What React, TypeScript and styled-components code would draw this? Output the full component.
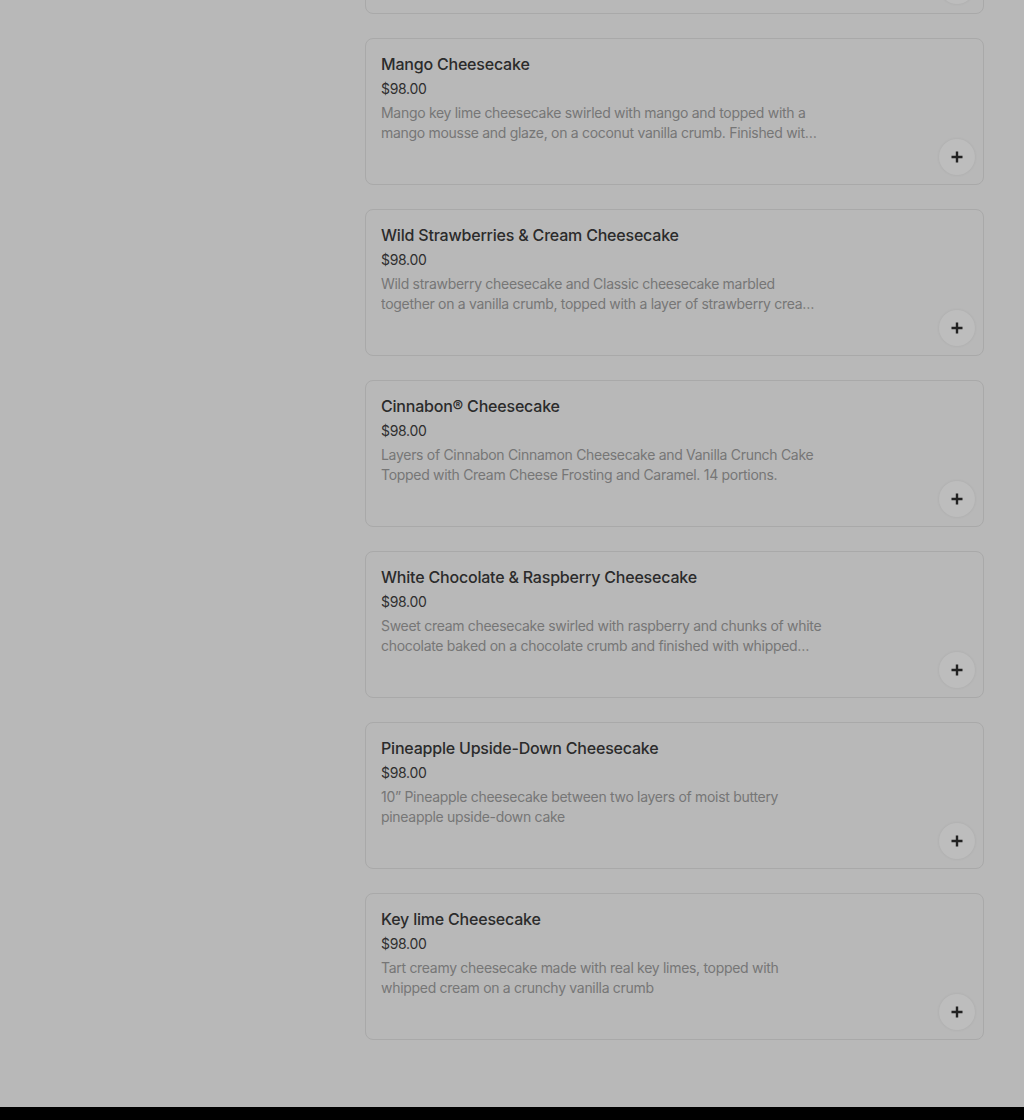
import React from "react";
import styled, { createGlobalStyle } from "styled-components";

const GlobalStyle = createGlobalStyle`
  html, body {
    margin: 0;
    padding: 0;
    background: #b8b8b8;
  }
  body {
    font-family: Inter, "Noto Sans", "Liberation Sans", sans-serif;
    -webkit-font-smoothing: antialiased;
  }
  * { box-sizing: border-box; }
`;

const Page = styled.div`
  display: flex;
  flex-direction: column;
  min-height: 1120px;
  background: #b8b8b8;
`;

const Layout = styled.div`
  display: grid;
  grid-template-columns: 301px 1fr;
  column-gap: 24px;
  padding: 0 40px;
  flex: 1;
`;

const Sidebar = styled.aside``;

const List = styled.ul`
  list-style: none;
  margin: 0;
  padding: 0 0 67px;
  display: flex;
  flex-direction: column;
  gap: 24px;
`;

const Clip = styled.li`
  height: 14px;
  overflow: hidden;
  display: flex;
  flex-direction: column;
  justify-content: flex-end;
`;

const Item = styled.li``;

const Card = styled.div`
  flex: none;
  height: 147px;
  border: 1px solid #a9a9a9;
  border-radius: 8px;
  display: flex;
  justify-content: space-between;
  background: #b8b8b8;
`;

const Info = styled.div`
  padding: 13px 0 0 15px;
  display: flex;
  flex-direction: column;
  width: 456px;
`;

const Title = styled.h3`
  margin: 0;
  font-size: 16px;
  line-height: 24px;
  font-weight: 500;
  letter-spacing: -0.2px;
  color: #2b2b2b;
`;

const Price = styled.div`
  margin-top: 3px;
  font-size: 14px;
  line-height: 20px;
  letter-spacing: -0.3px;
  color: #2f2f2f;
`;

const Desc = styled.p`
  margin: 4px 0 0;
  font-size: 14px;
  line-height: 20px;
  letter-spacing: -0.3px;
  color: #767676;
  display: -webkit-box;
  -webkit-line-clamp: 2;
  -webkit-box-orient: vertical;
  overflow: hidden;
  width: 441px;
`;

const Side = styled.div`
  display: flex;
  align-items: flex-end;
  padding: 0 8px 9px 0;
  margin-left: auto;
`;

const AddButton = styled.button`
  width: 36px;
  height: 36px;
  border-radius: 50%;
  border: none;
  padding: 0;
  background: #bdbdbd;
  box-shadow: 0 0 3px 0 rgba(0, 0, 0, 0.08);
  display: flex;
  align-items: center;
  justify-content: center;
  color: #222;
  cursor: pointer;
`;

const Footer = styled.footer`
  height: 13px;
  background: #000;
`;

const PlusIcon = () => (
  <svg width="12" height="12" viewBox="0 0 12 12" aria-hidden="true">
    <path d="M6 0.5v11M0.5 6h11" stroke="currentColor" strokeWidth="2.4" fill="none" />
  </svg>
);

type Product = { name: string; price: string; desc: string };

const products: Product[] = [
  {
    name: "Mango Cheesecake",
    price: "$98.00",
    desc: "Mango key lime cheesecake swirled with mango and topped with a mango mousse and glaze, on a coconut vanilla crumb. Finished with whipped cream.",
  },
  {
    name: "Wild Strawberries & Cream Cheesecake",
    price: "$98.00",
    desc: "Wild strawberry cheesecake and Classic cheesecake marbled together on a vanilla crumb, topped with a layer of strawberry cream and fresh strawberries.",
  },
  {
    name: "Cinnabon® Cheesecake",
    price: "$98.00",
    desc: "Layers of Cinnabon Cinnamon Cheesecake and Vanilla Crunch Cake Topped with Cream Cheese Frosting and Caramel. 14 portions.",
  },
  {
    name: "White Chocolate & Raspberry Cheesecake",
    price: "$98.00",
    desc: "Sweet cream cheesecake swirled with raspberry and chunks of white chocolate baked on a chocolate crumb and finished with whipped cream and white chocolate shavings.",
  },
  {
    name: "Pineapple Upside-Down Cheesecake",
    price: "$98.00",
    desc: "10\u201D Pineapple cheesecake between two layers of moist buttery pineapple upside-down cake",
  },
  {
    name: "Key lime Cheesecake",
    price: "$98.00",
    desc: "Tart creamy cheesecake made with real key limes, topped with whipped cream on a crunchy vanilla crumb",
  },
];

const AddAction = ({ label }: { label: string }) => (
  <Side>
    <AddButton aria-label={label}>
      <PlusIcon />
    </AddButton>
  </Side>
);

const ProductCard = ({ p }: { p: Product }) => (
  <Card>
    <Info>
      <Title>{p.name}</Title>
      <Price>{p.price}</Price>
      <Desc>{p.desc}</Desc>
    </Info>
    <AddAction label={`Add ${p.name}`} />
  </Card>
);

export default function App() {
  return (
    <>
      <GlobalStyle />
      <Page>
        <Layout>
          <Sidebar />
          <List>
            <Clip>
              <Card>
                <AddAction label="Add item" />
              </Card>
            </Clip>
            {products.map((p) => (
              <Item key={p.name}>
                <ProductCard p={p} />
              </Item>
            ))}
          </List>
        </Layout>
        <Footer />
      </Page>
    </>
  );
}
